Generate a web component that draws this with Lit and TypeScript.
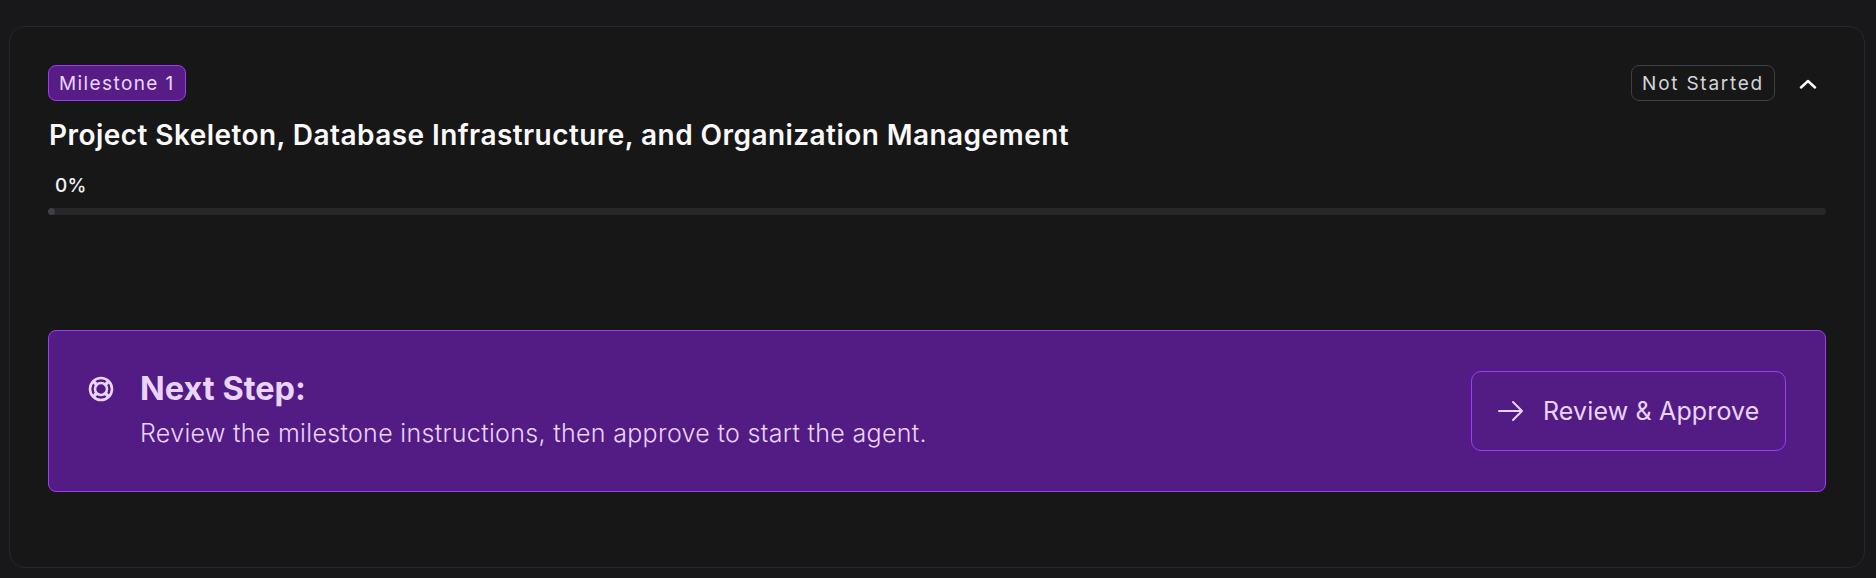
import { LitElement, html, css } from "lit";
import { customElement } from "lit/decorators.js";

@customElement("app-root")
export class AppRoot extends LitElement {
  static styles = css`
    :host {
      display: block;
      height: 578px;
      box-sizing: border-box;
      padding: 26px 11px 10px 9px;
      background: #18181a;
      font-family: Inter, "Liberation Sans", sans-serif;
      overflow: hidden;
    }
    .card {
      box-sizing: border-box;
      height: 542px;
      border: 1px solid #27272a;
      border-radius: 16px;
      background: #171717;
      padding: 38px;
    }
    .top {
      display: flex;
      align-items: center;
      justify-content: space-between;
      height: 36px;
    }
    .badge {
      box-sizing: border-box;
      height: 36px;
      display: flex;
      align-items: center;
      border-radius: 8px;
      font-size: 19px;
      letter-spacing: 1.4px;
      padding: 0 10px;
    }
    .milestone {
      background: #581c87;
      border: 1px solid #9f3af5;
      color: #e9d5ff;
    }
    .right {
      display: flex;
      align-items: center;
      gap: 24px;
      padding-right: 9px;
    }
    .status {
      border: 1px solid #3f3f46;
      color: #d4d4d8;
      letter-spacing: 1.75px;
    }
    .chev {
      display: block;
      width: 18px;
      height: 10px;
      margin-top: 2px;
      color: #fff;
    }
    h2 {
      margin: 0;
      padding-left: 1px;
      margin-top: 17px;
      font-size: 28px;
      line-height: 34px;
      letter-spacing: 0.44px;
      font-weight: 600;
      color: #fafafa;
    }
    .pct {
      margin-top: 23px;
      padding-left: 7px;
      font-size: 19px;
      line-height: 22px;
      letter-spacing: 0.3px;
      font-weight: 500;
      color: #f4f4f5;
    }
    .track {
      height: 7px;
      margin-top: 11px;
      border-radius: 4px;
      background: #27272a;
    }
    .fill {
      width: 7px;
      height: 7px;
      border-radius: 50%;
      background: #3f3f46;
    }
    .panel {
      box-sizing: border-box;
      height: 162px;
      margin-top: 115px;
      display: flex;
      align-items: center;
      justify-content: space-between;
      padding: 0 39px;
      border: 1px solid #9f3af5;
      border-radius: 8px;
      background: #521c84;
      color: #e9d5ff;
    }
    .msg {
      display: grid;
      grid-template-columns: 26px auto;
      column-gap: 26px;
      align-items: center;
      padding-bottom: 3px;
    }
    .ring {
      display: block;
      width: 26px;
      height: 26px;
    }
    .head {
      font-size: 32.5px;
      line-height: 40px;
      font-weight: 700;
    }
    .desc {
      grid-column: 2;
      margin-top: 6px;
      font-size: 25px;
      line-height: 36px;
      letter-spacing: 0.32px;
      font-weight: 300;
    }
    .btn {
      box-sizing: border-box;
      width: 315px;
      height: 80px;
      display: flex;
      align-items: center;
      gap: 19px;
      padding-left: 26px;
      border: 1px solid #9f3af5;
      border-radius: 10px;
      font-size: 25px;
      letter-spacing: 0.15px;
      font-weight: 400;
    }
    .arrow {
      display: block;
      width: 26px;
      height: 24px;
    }
  `;

  render() {
    return html`
      <div class="card">
        <div class="top">
          <div class="badge milestone">Milestone 1</div>
          <div class="right">
            <div class="badge status">Not Started</div>
            <svg class="chev" viewBox="0 0 18 10" fill="none" stroke="currentColor" stroke-width="2.4" stroke-linecap="round" stroke-linejoin="round">
              <path d="M2 8.5 9 2l7 6.5" />
            </svg>
          </div>
        </div>
        <h2>Project Skeleton, Database Infrastructure, and Organization Management</h2>
        <div class="pct">0%</div>
        <div class="track"><div class="fill"></div></div>
        <div class="panel">
          <div class="msg">
            <svg class="ring" viewBox="0 0 26 26" fill="none" stroke="currentColor" stroke-width="2.6">
              <circle cx="13" cy="13" r="11" />
              <circle cx="13" cy="13" r="6" />
              <path stroke-width="3.4" d="M5.6 5.6l3.6 3.6M20.4 5.6l-3.6 3.6M5.6 20.4l3.6-3.6M20.4 20.4l-3.6-3.6" />
            </svg>
            <div class="head">Next Step:</div>
            <div class="desc">Review the milestone instructions, then approve to start the agent.</div>
          </div>
          <div class="btn">
            <svg class="arrow" viewBox="0 0 26 24" fill="none" stroke="currentColor" stroke-width="2" stroke-linecap="round" stroke-linejoin="round">
              <path d="M1 12h23M15 3l9 9-9 9" />
            </svg>
            <span>Review &amp; Approve</span>
          </div>
        </div>
      </div>
    `;
  }
}
